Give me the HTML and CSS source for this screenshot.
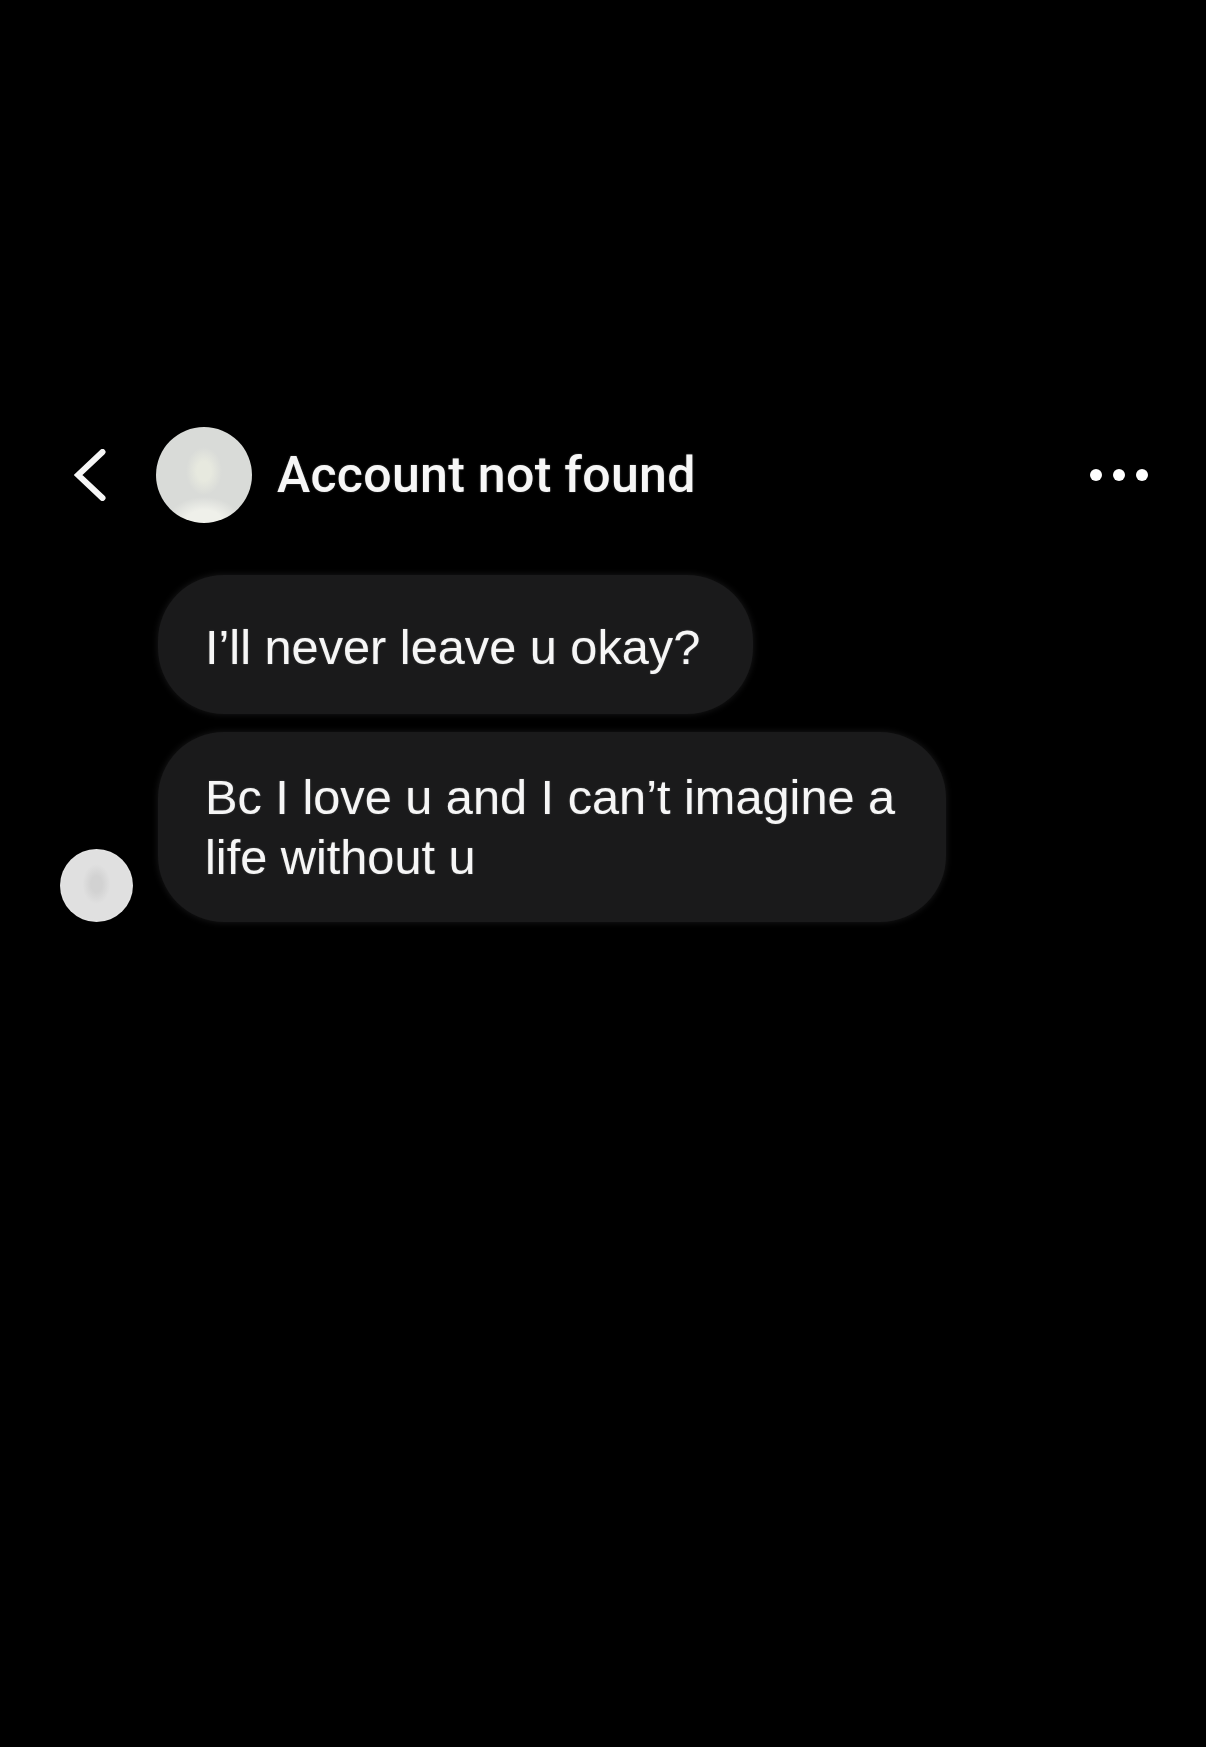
FILE: index.html
```html
<!DOCTYPE html>
<html lang="en">
<head>
<meta charset="utf-8">
<title>Account not found</title>
<link rel="stylesheet" href="styles.css">
</head>
<body>
<main class="screen">
  <header class="header">
    <svg class="back" width="32" height="52" viewBox="0 0 32 52" fill="none"><path d="M28.5 3 L4 26 L28.5 49" stroke="#f6f6f6" stroke-width="6" stroke-linecap="round" stroke-linejoin="miter"/></svg>
    <div class="avatar avatar-large"></div>
    <h1 class="title">Account not found</h1>
    <div class="dots"><span class="dot"></span><span class="dot"></span><span class="dot"></span></div>
  </header>
  <section class="thread">
    <div class="row">
      <div class="bubble bubble-one">I’ll never leave u okay?</div>
    </div>
    <div class="row row-avatar">
      <div class="avatar avatar-small"></div>
      <div class="bubble bubble-two">Bc I love u and I can’t imagine a<br>life without u</div>
    </div>
  </section>
</main>
</body>
</html>
```

FILE: styles.css
```css
* { box-sizing: border-box; }
html, body { margin: 0; background: #000; }
.screen {
  width: 1206px;
  height: 1747px;
  overflow: hidden;
  background: #000;
  padding-top: 427px;
  font-family: "Liberation Sans", Arial, sans-serif;
  color: #f6f6f6;
}
.header {
  display: flex;
  align-items: center;
  height: 96px;
  padding-left: 74px;
  padding-right: 58px;
}
.back { flex: none; }
.avatar {
  flex: none;
  border-radius: 50%;
}
.avatar-large {
  width: 96px;
  height: 96px;
  margin-left: 50px;
  background:
    radial-gradient(ellipse 18px 24px at 50% 46%, #e7e9df 0 40%, rgba(231,233,223,0) 100%),
    radial-gradient(ellipse 38px 26px at 50% 100%, #eff0ea 0 50%, rgba(239,240,234,0) 100%),
    #d9dbd8;
}
.title {
  margin: 0 0 0 25px;
  font-family: Roboto, "Liberation Sans", sans-serif;
  font-size: 50px;
  font-weight: 500;
  letter-spacing: 0.3px;
  text-shadow: 0 0 2px rgba(255,255,255,.3);
  line-height: 56px;
  white-space: nowrap;
}
.dots {
  margin-left: auto;
  display: flex;
  gap: 11px;
}
.dot {
  width: 12px;
  height: 12px;
  border-radius: 50%;
  background: #fff;
}
.thread {
  display: flex;
  flex-direction: column;
  gap: 18px;
  margin-top: 52px;
  padding-left: 60px;
}
.row {
  display: flex;
  align-items: flex-end;
  padding-left: 98px;
}
.row-avatar { padding-left: 0; }
.avatar-small {
  width: 73px;
  height: 73px;
  margin-right: 25px;
  background:
    radial-gradient(ellipse 14px 20px at 50% 48%, #d2d2d2 0 40%, rgba(210,210,210,0) 100%),
    radial-gradient(circle at 50% 50%, #e0e0e0 0 66%, #f8f8f8 100%);
}
.bubble {
  background: #1a1a1b;
  box-shadow: 0 0 7px #1a1a1b;
  border-radius: 66px;
  padding: 0 47px;
  font-size: 48.7px;
  line-height: 60px;
  font-weight: 400;
  text-shadow: 0 0 2px rgba(255,255,255,.25);
  white-space: nowrap;
}
.bubble-one {
  width: 595px;
  height: 139px;
  padding-top: 42px;
}
.bubble-two {
  width: 788px;
  height: 190px;
  padding-top: 35px;
}
```
